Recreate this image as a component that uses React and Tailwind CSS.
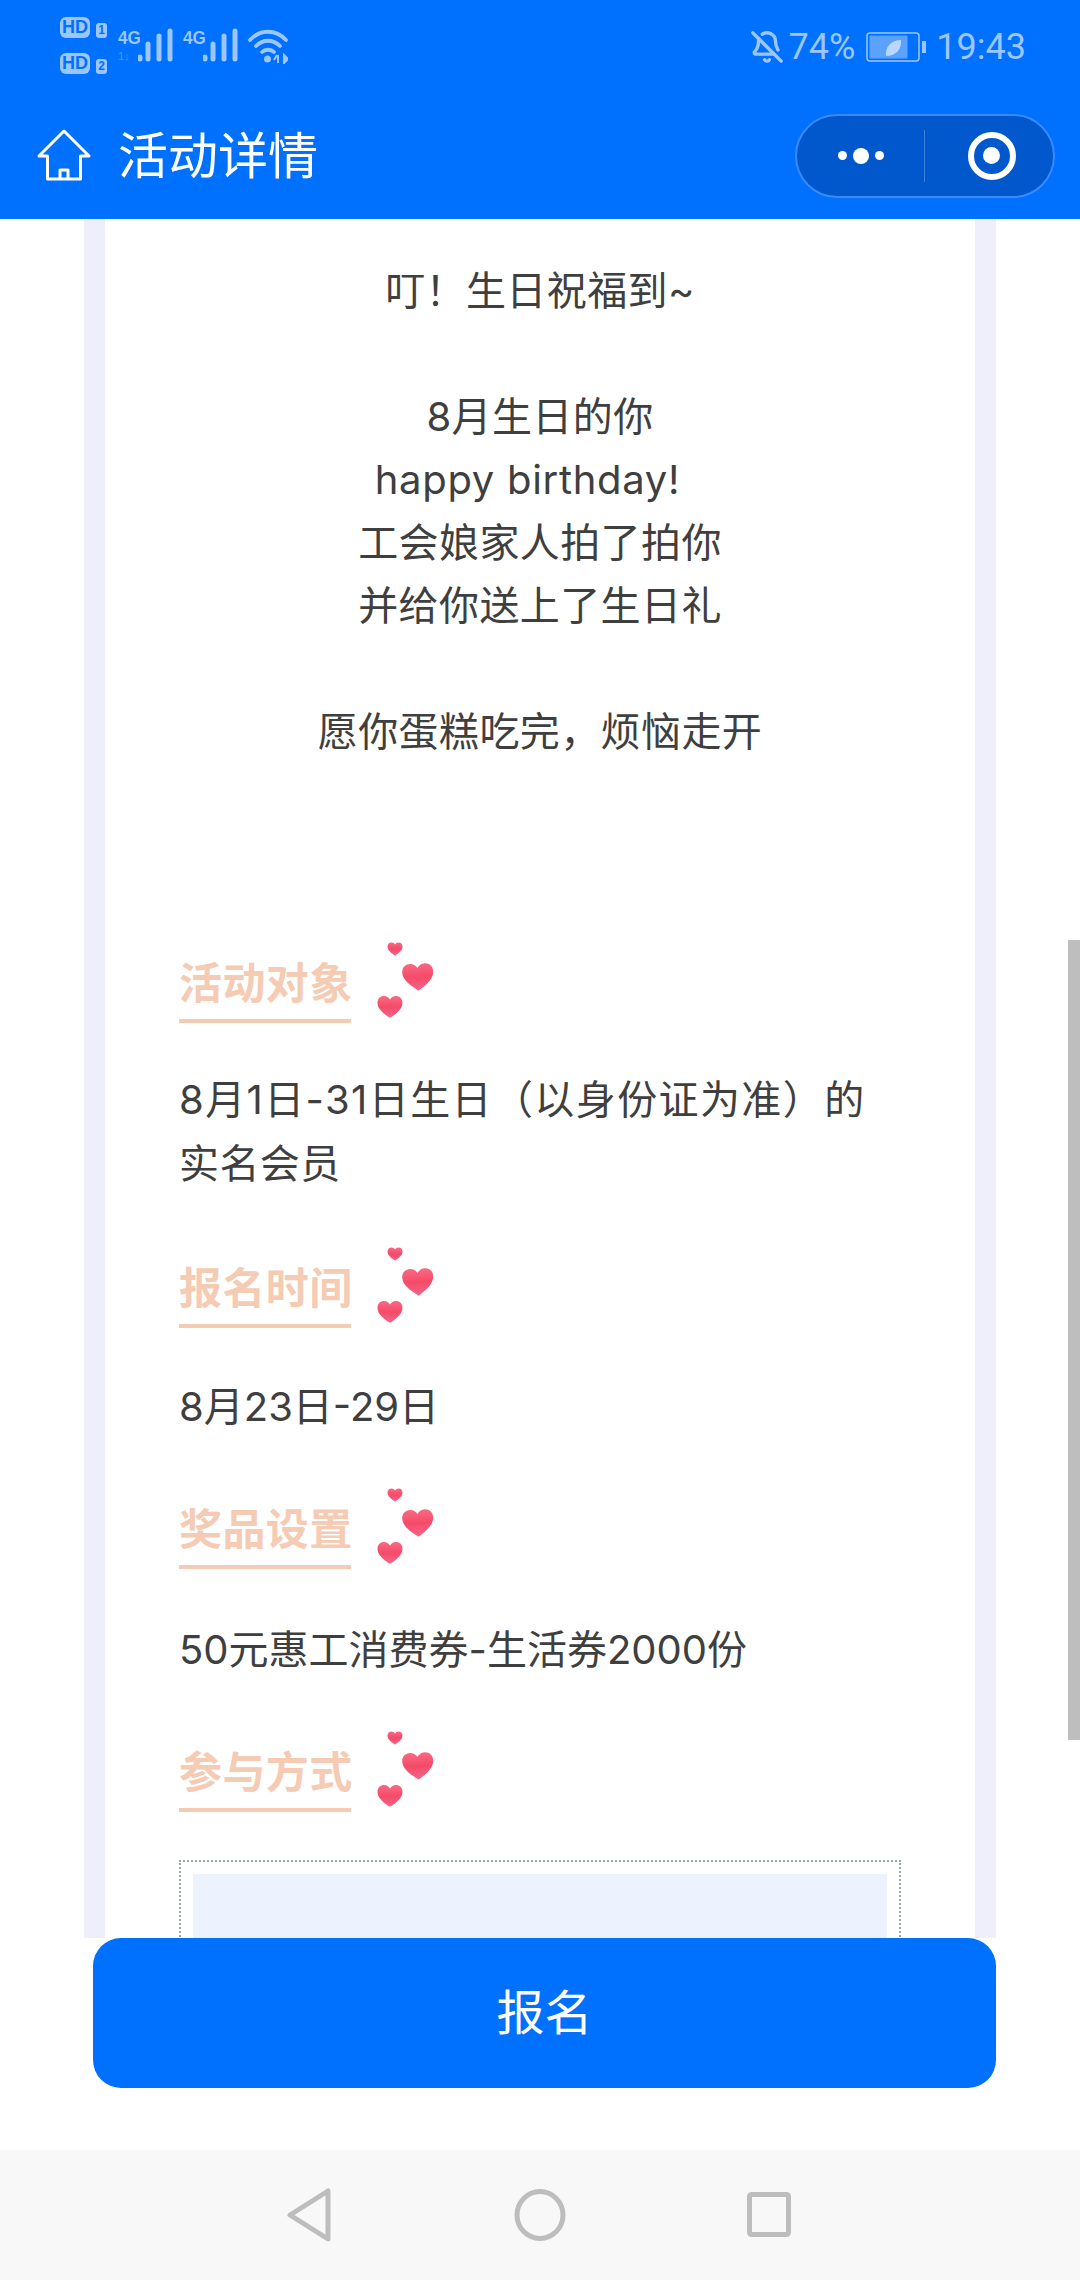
import { BellOff } from 'lucide-react';

const FONT = 'font-["Inter","Noto_Sans_CJK_SC",sans-serif]';

const GREETING = [
  '叮！生日祝福到~',
  '',
  '8月生日的你',
  'happy birthday!',
  '工会娘家人拍了拍你',
  '并给你送上了生日礼',
  '',
  '愿你蛋糕吃完，烦恼走开',
];

const HEART = 'M16 28C7 22 0 16 0 8.500C0 3.500 3.500 0 8.500 0C12 0 14.500 2 16 4.500C17.500 2 20 0 23.500 0C28.500 0 32 3.500 32 8.500C32 16 25 22 16 28Z';

function Hearts() {
  return (
    <svg width="60" height="80" viewBox="0 0 60 80" className="shrink-0 ml-[25px] -mt-[14px]">
      <defs>
        <linearGradient id="heartFill" x1="0" y1="0" x2="0" y2="1">
          <stop offset="0" stopColor="#fa6a85" />
          <stop offset="0.5" stopColor="#f54a68" />
          <stop offset="1" stopColor="#f5668a" />
        </linearGradient>
      </defs>
      <path d={HEART} fill="url(#heartFill)" transform="translate(11.500 1.500) scale(0.47)" />
      <path d={HEART} fill="url(#heartFill)" transform="translate(26.500 22.500) rotate(-3 16 14) scale(0.97)" />
      <path d={HEART} fill="url(#heartFill)" transform="translate(1.500 55) scale(0.78)" />
    </svg>
  );
}

function SectionTitle({ children }) {
  return (
    <div className="flex items-start">
      <div className="w-[172px] border-b-[4px] border-[#f5cbb4] pb-[8px] text-[43px] leading-[56px] font-bold text-[#f5cbb4] whitespace-nowrap">
        {children}
      </div>
      <Hearts />
    </div>
  );
}

function HdBadge({ n }) {
  return (
    <div className="flex items-end gap-[6px]">
      <span className="w-[30px] h-[21px] rounded-[6px] bg-[#9cc6ff] text-[#0070ff] text-[18px] leading-[21px] font-bold text-center font-['Liberation_Sans',sans-serif]">HD</span>
      <span className="w-[11px] h-[15px] rounded-[3px] bg-[#9cc6ff] text-[#0070ff] text-[12px] leading-[15px] font-bold text-center font-['Liberation_Sans',sans-serif]">{n}</span>
    </div>
  );
}

function Signal({ dim }) {
  return (
    <div className="relative w-[56px] h-[36px]">
      <span className="absolute left-0 top-[1px] text-[19px] leading-[17px] font-bold text-[#9cc6ff] font-['Liberation_Sans',sans-serif] scale-x-90 origin-left">4G</span>
      {dim && <span className="absolute left-0 top-[22px] text-[11px] leading-[12px] text-[#4f9bff] font-['Liberation_Sans',sans-serif]">1↓</span>}
      <svg width="36" height="36" viewBox="0 0 36 36" className="absolute right-0 top-0">
        <g stroke="#9cc6ff" strokeWidth="5" strokeLinecap="round">
          <path d="M2 29V31" />
          <path d="M10 16V31" />
          <path d="M21 8V31" />
          <path d="M32 3V31" />
        </g>
      </svg>
    </div>
  );
}

function Wifi() {
  return (
    <svg width="40" height="36" viewBox="0 0 40 36">
      <g fill="none" stroke="#9cc6ff" strokeWidth="3.800" strokeLinecap="round">
        <path d="M2 12C12 1 28 1 38 12" />
        <path d="M8 18C15 11 25 11 32 18" />
        <path d="M14 24C17 21 23 21 26 24" />
      </g>
      <circle cx="19.500" cy="31" r="3.500" fill="#9cc6ff" />
      <path d="M30 27V35M26 32L29 27M36 27L40 31L36 35Z" stroke="#9cc6ff" strokeWidth="2" fill="#9cc6ff" />
    </svg>
  );
}

function Battery() {
  return (
    <svg width="60" height="30" viewBox="0 0 60 30">
      <rect x="1" y="1" width="52" height="28" rx="3" fill="none" stroke="#9cc6ff" strokeWidth="1.500" />
      <rect x="3.500" y="3.500" width="38" height="23" rx="1" fill="#5ba2ff" />
      <path d="M56 9H60V21H56Z" fill="#9cc6ff" />
      <path d="M20 24C19 15 25 8 35 8C36 17 30 24 20 24Z" fill="#b9d7ff" />
    </svg>
  );
}

export default function App() {
  return (
    <div className={`relative w-[1080px] h-[2280px] bg-white overflow-hidden ${FONT}`}>
      {/* status bar and title */}
      <div className="h-[219px] bg-[#0070ff]">
        <div className="h-[92px] flex items-start justify-between pl-[60px] pr-[54px]">
          <div className="flex items-start pt-[17px]">
            <div className="flex flex-col gap-[15px]">
              <HdBadge n="1" />
              <HdBadge n="2" />
            </div>
            <div className="flex gap-[9px] ml-[11px] mt-[11px]">
              <Signal dim />
              <Signal />
              <Wifi />
            </div>
          </div>
          <div className="flex items-center pt-[27px] text-[36px] leading-[40px] text-[#9cc6ff] font-['Roboto',sans-serif]">
            <BellOff size={34} strokeWidth={2.400} className="mr-[5px]" />
            <span>74%</span>
            <span className="ml-[11px]"><Battery /></span>
            <span className="ml-[10px]">19:43</span>
          </div>
        </div>
        <div className="h-[127px] flex items-center justify-between pl-[37px] pr-[25px]">
          <div className="flex items-center">
            <svg width="54" height="54" viewBox="0 0 54 54" fill="none" stroke="#fff" strokeWidth="3" strokeLinejoin="round">
              <path d="M10.500 27H2L27 2L52 27H43.500V50H10.500Z" />
              <path d="M23 50V41H31V50" />
            </svg>
            <span className="ml-[27px] text-[50px] leading-[60px] text-white">活动详情</span>
          </div>
          <div className="w-[260px] h-[84px] rounded-full bg-[#0058cc] border-[2px] border-[#3a8aff] flex items-center">
            <div className="w-[127px] flex items-center justify-center gap-[6px]">
              <span className="w-[9px] h-[9px] rounded-full bg-white" />
              <span className="w-[16px] h-[16px] rounded-full bg-white" />
              <span className="w-[9px] h-[9px] rounded-full bg-white" />
            </div>
            <div className="w-[1px] h-[52px] bg-[#3a7fdc]" />
            <div className="flex-1 flex items-center justify-center pl-[5px]">
              <div className="w-[48px] h-[48px] rounded-full border-[6px] border-white flex items-center justify-center">
                <span className="w-[17px] h-[17px] rounded-full bg-white" />
              </div>
            </div>
          </div>
        </div>
      </div>

      {/* scrolled article */}
      <div className="h-[1719px] overflow-hidden">
        <div className="mx-[84px] px-[21px] bg-[#eeeffb] h-full">
          <div className="bg-white h-full px-[74px] pt-[40px] text-[40px] text-[#3f3f3f] tracking-[0.4px] [text-spacing-trim:space-all]">
            {GREETING.map((line, i) => (
              <div key={i} className={`h-[63px] leading-[63px] text-center whitespace-nowrap ${i === 3 ? 'pr-[25px] tracking-[0.7px]' : ''}`}>{line}</div>
            ))}
            <div className="mt-[192px]">
              <SectionTitle>活动对象</SectionTitle>
            </div>
            <div className="mt-[45px] leading-[64px] tracking-[1.4px] whitespace-nowrap">8月1日-31日生日（以身份证为准）的</div>
            <div className="leading-[64px]">实名会员</div>
            <div className="mt-[64px]">
              <SectionTitle>报名时间</SectionTitle>
            </div>
            <div className="mt-[47px] leading-[64px] tracking-normal">8月23日-29日</div>
            <div className="mt-[62px]">
              <SectionTitle>奖品设置</SectionTitle>
            </div>
            <div className="mt-[49px] leading-[64px] tracking-normal">50元惠工消费券-生活券2000份</div>
            <div className="mt-[62px]">
              <SectionTitle>参与方式</SectionTitle>
            </div>
            <div className="mt-[48px] border-[2px] border-dotted border-[#8fa8a8] p-[12px] h-[300px]">
              <div className="bg-[#ecf2fe] h-full" />
            </div>
          </div>
        </div>
      </div>

      {/* sign-up button */}
      <div className="h-[212px] px-[93px]">
        <button className="w-[903px] h-[150px] rounded-[28px] bg-[#0070ff] text-white text-[48px] leading-[150px] text-center">报名</button>
      </div>

      {/* android nav */}
      <div className="h-[130px] bg-[#f8f8f8] flex items-center justify-center">
        <svg width="1080" height="130" viewBox="0 0 1080 130" fill="none" stroke="#bdbdbd" strokeWidth="5" strokeLinejoin="round">
          <path d="M290 65L328 41V89Z" />
          <ellipse cx="540" cy="65" rx="23" ry="23.500" />
          <rect x="749.500" y="44.500" width="39" height="40" rx="2" />
        </svg>
      </div>

      {/* scrollbar overlay */}
      <div className="absolute right-0 top-[940px] w-[12px] h-[800px] bg-[#bebebe]" />
    </div>
  );
}
